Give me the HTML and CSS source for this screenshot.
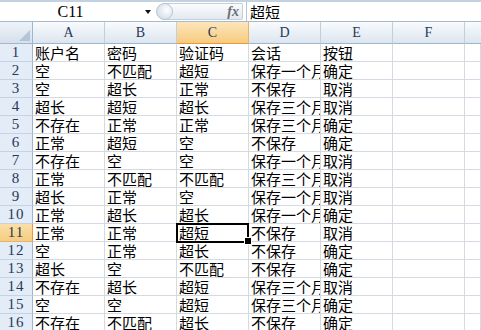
FILE: index.html
```html
<!DOCTYPE html>
<html>
<head>
<meta charset="utf-8">
<link rel="stylesheet" href="styles.css">
</head>
<body>
<div class="app">
  <div class="fbar">
    <div class="namebox"><span class="ref">C11</span><span class="arrow"></span></div>
    <div class="fxwrap"><div class="pill"><span class="knob"></span><span class="fx">fx</span></div></div>
    <div class="finput">超短</div>
  </div>
  <div class="sheet">
    <div class="corner"><span class="tri"></span></div><div class="ch">A</div><div class="ch">B</div><div class="ch on">C</div><div class="ch">D</div><div class="ch">E</div><div class="ch">F</div><div class="ch last"></div>

    <div class="rh">1</div><div class="c">账户名</div><div class="c">密码</div><div class="c">验证码</div><div class="c">会话</div><div class="c">按钮</div><div class="c"></div><div class="c"></div>
    <div class="rh">2</div><div class="c">空</div><div class="c">不匹配</div><div class="c">超短</div><div class="c">保存一个月</div><div class="c">确定</div><div class="c"></div><div class="c"></div>
    <div class="rh">3</div><div class="c">空</div><div class="c">超长</div><div class="c">正常</div><div class="c">不保存</div><div class="c">取消</div><div class="c"></div><div class="c"></div>
    <div class="rh">4</div><div class="c">超长</div><div class="c">超短</div><div class="c">超长</div><div class="c">保存三个月</div><div class="c">取消</div><div class="c"></div><div class="c"></div>
    <div class="rh">5</div><div class="c">不存在</div><div class="c">正常</div><div class="c">正常</div><div class="c">保存三个月</div><div class="c">确定</div><div class="c"></div><div class="c"></div>
    <div class="rh">6</div><div class="c">正常</div><div class="c">超短</div><div class="c">空</div><div class="c">不保存</div><div class="c">确定</div><div class="c"></div><div class="c"></div>
    <div class="rh">7</div><div class="c">不存在</div><div class="c">空</div><div class="c">空</div><div class="c">保存一个月</div><div class="c">取消</div><div class="c"></div><div class="c"></div>
    <div class="rh">8</div><div class="c">正常</div><div class="c">不匹配</div><div class="c">不匹配</div><div class="c">保存三个月</div><div class="c">取消</div><div class="c"></div><div class="c"></div>
    <div class="rh">9</div><div class="c">超长</div><div class="c">正常</div><div class="c">空</div><div class="c">保存一个月</div><div class="c">取消</div><div class="c"></div><div class="c"></div>
    <div class="rh">10</div><div class="c">正常</div><div class="c">超长</div><div class="c">超长</div><div class="c">保存一个月</div><div class="c">确定</div><div class="c"></div><div class="c"></div>
    <div class="rh on">11</div><div class="c">正常</div><div class="c">正常</div><div class="c sel">超短</div><div class="c">不保存</div><div class="c">取消</div><div class="c"></div><div class="c"></div>
    <div class="rh">12</div><div class="c">空</div><div class="c">正常</div><div class="c">超长</div><div class="c">不保存</div><div class="c">确定</div><div class="c"></div><div class="c"></div>
    <div class="rh">13</div><div class="c">超长</div><div class="c">空</div><div class="c">不匹配</div><div class="c">不保存</div><div class="c">确定</div><div class="c"></div><div class="c"></div>
    <div class="rh">14</div><div class="c">不存在</div><div class="c">超长</div><div class="c">超短</div><div class="c">保存三个月</div><div class="c">取消</div><div class="c"></div><div class="c"></div>
    <div class="rh">15</div><div class="c">空</div><div class="c">空</div><div class="c">超短</div><div class="c">保存三个月</div><div class="c">确定</div><div class="c"></div><div class="c"></div>
    <div class="rh">16</div><div class="c">不存在</div><div class="c">不匹配</div><div class="c">超长</div><div class="c">不保存</div><div class="c">确定</div><div class="c"></div><div class="c"></div>
  </div>
</div>
</body>
</html>
```
FILE: styles.css
```css
* { box-sizing: border-box; }
html, body { margin: 0; padding: 0; background: #fff; }
body {
  width: 481px;
  height: 330px;
  overflow: hidden;
  font-family: "Noto Sans CJK SC", "Noto Sans", sans-serif;
  font-size: 15px;
  color: #000;
}
.app { width: 481px; }

/* formula bar */
.fbar {
  display: flex;
  height: 22px;
  border-top: 2px solid #c3d1e1;
  border-bottom: 1px solid #a7b9cd;
  background: #fff;
}
.namebox {
  width: 157px;
  display: flex;
  align-items: center;
}
.ref {
  width: 141px;
  text-align: center;
  font-family: "Liberation Serif", serif;
  font-size: 16px;
  line-height: 19px;
  color: #000;
}
.arrow {
  width: 0;
  height: 0;
  margin-left: 4px;
  margin-top: 1px;
  border-left: 3.5px solid transparent;
  border-right: 3.5px solid transparent;
  border-top: 4px solid #111;
}
.fxwrap {
  width: 90px;
  display: flex;
  align-items: center;
  padding-right: 3px;
  border-right: 1px solid #b7c6d7;
}
.pill {
  flex: 1;
  height: 17px;
  display: flex;
  align-items: center;
  justify-content: space-between;
  border: 1px solid #c4cfdb;
  border-left: none;
  border-radius: 9px 2px 2px 9px;
  background: linear-gradient(#fbfcfd, #e3e9f0);
}
.knob {
  width: 17px;
  height: 17px;
  margin-left: -1px;
  border-radius: 50%;
  border: 1px solid #b8c4d2;
  background: radial-gradient(circle at 65% 40%, #ffffff 0, #e9eef3 40%, #c9d3de 100%);
}
.fx {
  font-family: "Liberation Serif", serif;
  font-style: italic;
  font-weight: bold;
  font-size: 14px;
  color: #6a6f76;
  margin-right: 3px;
  line-height: 15px;
}
.finput {
  flex: 1;
  padding-left: 3px;
  line-height: 19px;
  font-size: 15px;
}

/* sheet grid */
.sheet {
  display: grid;
  grid-template-columns: 33px repeat(6, 72px) 1fr;
  grid-template-rows: 22px;
  grid-auto-rows: 18px;
}
.corner {
  position: relative;
  background: linear-gradient(#eef3f9, #d6e0ec);
  border-right: 1px solid #9eb6ce;
  border-bottom: 1px solid #9eb6ce;
}
.tri {
  position: absolute;
  right: 2px;
  bottom: 2px;
  width: 0;
  height: 0;
  border-left: 11px solid transparent;
  border-bottom: 11px solid #b4c5d8;
}
.ch {
  background: linear-gradient(#f9fbfd, #dce5ef);
  border-right: 1px solid #c2cfdd;
  border-bottom: 1px solid #9eb6ce;
  text-align: center;
  font-family: "Liberation Serif", serif;
  font-size: 14px;
  line-height: 21px;
  color: #1f3a5c;
}
.ch.on {
  background: linear-gradient(#fce6bd, #f7cb7e);
  border-right-color: #e6b56a;
  border-bottom-color: #f29536;
}
.ch.last { border-right: none; }
.rh {
  background: #e4ecf7;
  border-right: 1px solid #9eb6ce;
  border-bottom: 1px solid #c5d3e3;
  text-align: center;
  font-family: "Liberation Serif", serif;
  font-size: 15px;
  line-height: 17px;
  color: #1f3a5c;
  letter-spacing: 1px;
}
.rh.on {
  background: linear-gradient(#fbdfa8, #f7cc80);
  border-right-color: #f29536;
  border-bottom-color: #e6b56a;
}
.c {
  border-right: 1px solid #d4d9e2;
  border-bottom: 1px solid #d4d9e2;
  padding-left: 2px;
  line-height: 17px;
  white-space: nowrap;
  overflow-x: clip;
  overflow-y: visible;
}
.c.sel {
  position: relative;
  overflow: visible;
}
.c.sel::before {
  content: "";
  position: absolute;
  left: -1px;
  top: -1px;
  right: -1px;
  bottom: -2px;
  border: 2px solid #000;
  z-index: 2;
}
.c.sel::after {
  content: "";
  position: absolute;
  right: -4px;
  bottom: -4px;
  width: 6px;
  height: 6px;
  background: #000;
  border: 1px solid #fff;
  z-index: 3;
}
```
